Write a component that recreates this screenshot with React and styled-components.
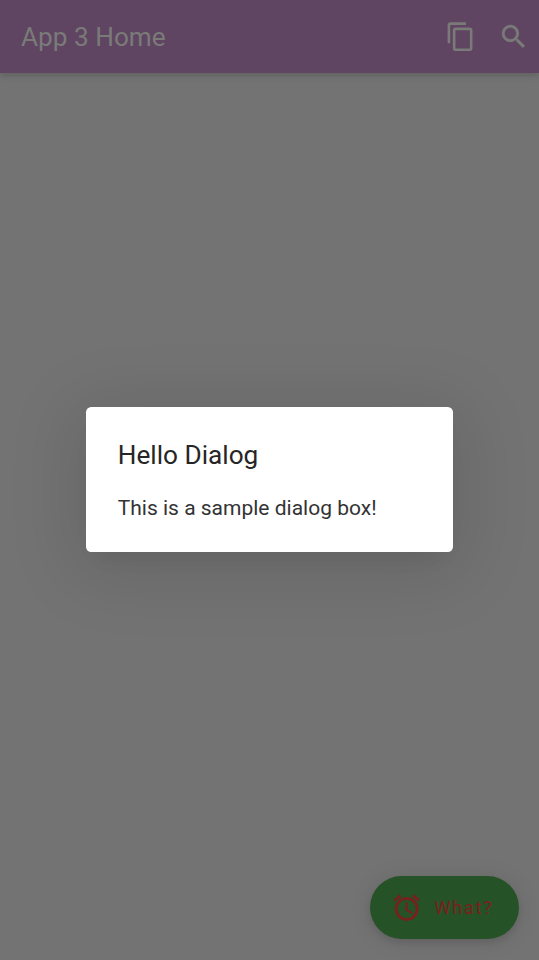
import React from 'react';
import styled, { createGlobalStyle } from 'styled-components';

const GlobalStyle = createGlobalStyle`
  * { box-sizing: border-box; }
  html, body { margin: 0; padding: 0; overflow: hidden; }
  body { font-family: Roboto, sans-serif; background: #737373; }
`;

const Screen = styled.main`
  display: flex;
  flex-direction: column;
  position: relative;
  width: 539px;
  height: 960px;
  overflow: hidden;
  background: #737373;
`;

const AppBar = styled.header`
  display: flex;
  align-items: center;
  flex: none;
  height: 73px;
  padding: 0 10px 0 21px;
  background: #5f4562;
  color: #7a7b79;
  box-shadow: 0 2px 5px rgba(0, 0, 0, 0.11), 0 4px 8px rgba(0, 0, 0, 0.06);
`;

const AppTitle = styled.h1`
  flex: 1;
  margin: 0;
  font-size: 26.2px;
  font-weight: 400;
  line-height: 32px;
`;

const Actions = styled.div`
  display: flex;
  gap: 21px;
`;

const IconButton = styled.button`
  display: flex;
  padding: 0;
  border: 0;
  background: none;
  color: inherit;
`;

const Glyph = styled.svg`
  display: block;
  flex: none;
  width: 31.4px;
  height: 31.4px;
  fill: currentColor;
  stroke: currentColor;
  stroke-width: ${({ $weight = 0 }) => $weight};
`;

const DialogLayer = styled.div`
  position: absolute;
  inset: 0;
  display: flex;
  align-items: center;
  justify-content: center;
  padding-bottom: 1px;
`;

const Dialog = styled.section`
  width: 367.5px;
  height: 144.5px;
  padding: 31.5px 32px;
  border-radius: 5.2px;
  background: #fff;
  box-shadow:
    0 14px 20px -9px rgba(0, 0, 0, 0.06),
    0 11px 70px 12px rgba(0, 0, 0, 0.11);
`;

const DialogTitle = styled.h2`
  margin: 0;
  font-size: 26.2px;
  font-weight: 400;
  line-height: 32px;
  color: #262626;
`;

const DialogText = styled.p`
  margin: 24px 0 0;
  font-size: 21px;
  line-height: 26px;
  white-space: nowrap;
  color: #333;
`;

const Fab = styled.button`
  position: absolute;
  right: 20px;
  bottom: 21px;
  display: flex;
  align-items: center;
  gap: 11.5px;
  width: 149px;
  height: 63px;
  padding: 0 0 0 21.3px;
  border: 0;
  border-radius: 32px;
  background: #265228;
  color: #7a211d;
  font-family: inherit;
  font-size: 18.4px;
  font-weight: 400;
  letter-spacing: 1.6px;
  box-shadow:
    0 4px 7px -1px rgba(0, 0, 0, 0.1),
    0 2px 22px rgba(0, 0, 0, 0.1);
`;

export default function App() {
  return (
    <>
      <GlobalStyle />
      <Screen>
        <AppBar>
          <AppTitle>App 3 Home</AppTitle>
          <Actions>
            <IconButton aria-label="Copy">
              <Glyph viewBox="0 0 24 24">
                <path d="M16 1H4c-1.1 0-2 .9-2 2v14h2V3h12V1zm3 4H8c-1.1 0-2 .9-2 2v14c0 1.1.9 2 2 2h11c1.1 0 2-.9 2-2V7c0-1.1-.9-2-2-2zm0 16H8V7h11v14z" />
              </Glyph>
            </IconButton>
            <IconButton aria-label="Search">
              <Glyph viewBox="0 0 24 24" $weight={0.3}>
                <path d="M15.5 14h-.79l-.28-.27A6.471 6.471 0 0 0 16 9.5 6.5 6.5 0 1 0 9.5 16c1.61 0 3.09-.59 4.23-1.57l.27.28v.79l5 4.99L20.49 19l-4.99-5zm-6 0C7.01 14 5 11.99 5 9.5S7.01 5 9.5 5 14 7.01 14 9.5 11.99 14 9.5 14z" />
              </Glyph>
            </IconButton>
          </Actions>
        </AppBar>
        <Fab>
          <Glyph viewBox="0 0 24 24" $weight={0.15}>
            <path d="M22 5.72l-4.6-3.86-1.29 1.53 4.6 3.86L22 5.72zM7.88 3.39L6.6 1.86 2 5.71l1.29 1.53 4.59-3.85zM12.5 8H11v6l4.75 2.85.75-1.23-4-2.37V8zM12 4c-4.97 0-9 4.03-9 9s4.02 9 9 9a9 9 0 0 0 0-18zm0 16c-3.87 0-7-3.13-7-7s3.13-7 7-7 7 3.13 7 7-3.13 7-7 7z" />
          </Glyph>
          <span>What?</span>
        </Fab>
        <DialogLayer>
          <Dialog role="dialog" aria-label="Hello Dialog">
            <DialogTitle>Hello Dialog</DialogTitle>
            <DialogText>This is a sample dialog box!</DialogText>
          </Dialog>
        </DialogLayer>
      </Screen>
    </>
  );
}
